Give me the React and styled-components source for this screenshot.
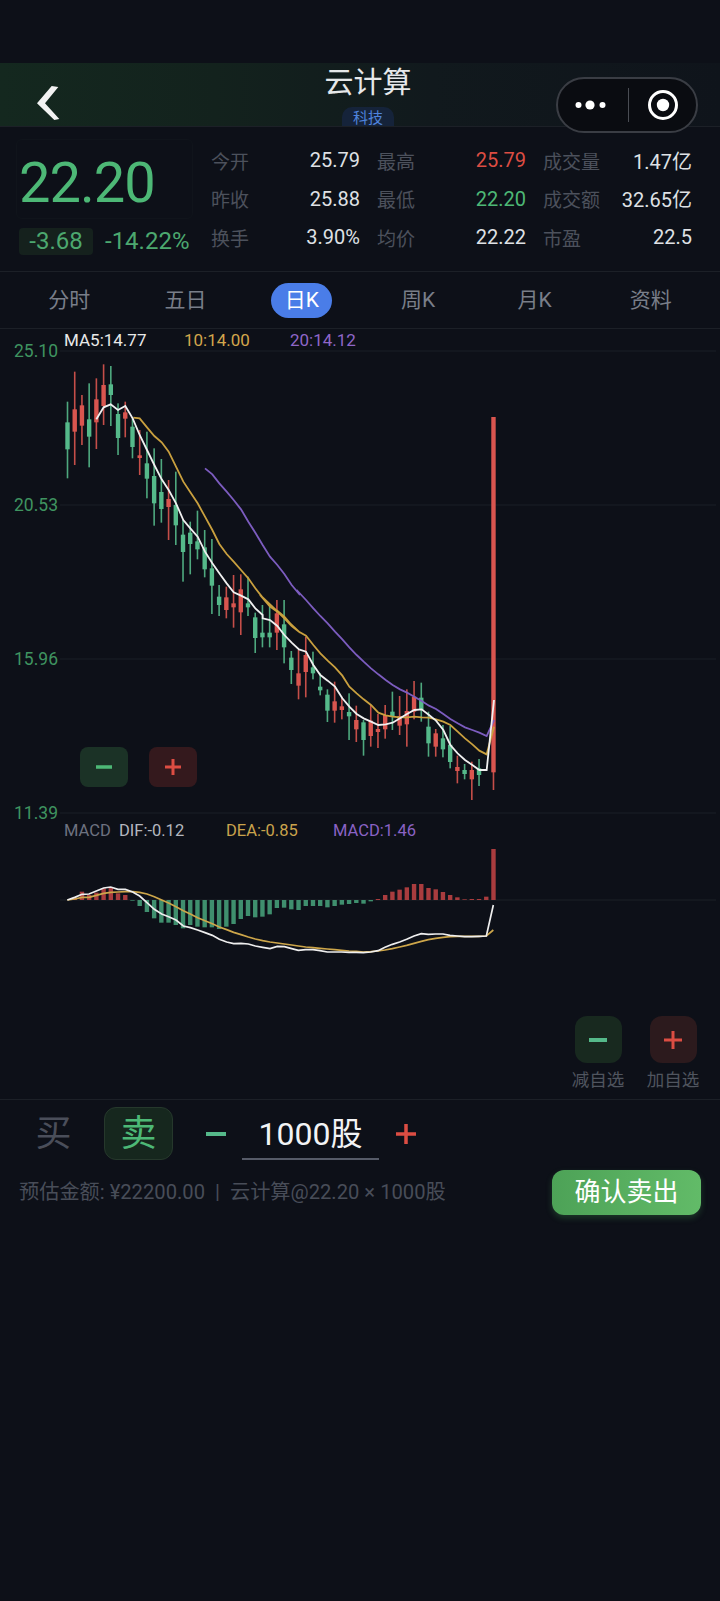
import styled, { createGlobalStyle } from "styled-components";

const GREEN = "#4db876";
const RED = "#dc4d43";
const FONT = `Roboto, "Noto Sans CJK SC", sans-serif`;

// candle readings: [index, high, bodyTop, bodyBottom, low, colour]
const CANDLES_A = [
  [0, 185, 247, 328, 415, "g"], [1, 95, 208, 275, 375, "r"], [2, 165, 196, 257, 315, "r"],
  [3, 130, 238, 290, 382, "g"], [4, 115, 178, 247, 327, "r"], [5, 73, 135, 198, 255, "r"],
  [6, 78, 133, 165, 258, "g"], [7, 190, 222, 294, 345, "g"], [8, 185, 217, 236, 292, "r"],
  [9, 235, 260, 321, 355, "g"], [10, 270, 346, 354, 405, "r"], [11, 275, 370, 416, 475, "g"],
  [12, 325, 408, 490, 557, "g"], [13, 357, 456, 507, 548, "g"], [14, 420, 477, 501, 600, "r"],
  [15, 395, 495, 556, 615, "g"], [16, 540, 584, 636, 725, "g"], [17, 545, 578, 612, 703, "g"],
  [18, 512, 604, 628, 658, "g"], [19, 570, 622, 688, 712, "g"], [20, 597, 685, 737, 822, "g"],
  [21, 735, 770, 795, 828, "g"], [22, 740, 772, 810, 835, "r"], [23, 705, 790, 802, 863, "r"],
  [24, 703, 748, 817, 885, "r"], [25, 710, 790, 802, 828, "g"], [26, 818, 832, 894, 939, "g"],
];
const CANDLES_B = [
  [27, 45, 128, 142, 172, "g"], [28, 50, 128, 142, 172, "g"], [29, 30, 70, 128, 180, "r"],
  [30, 30, 103, 172, 220, "g"], [31, 183, 203, 240, 282, "g"], [32, 180, 250, 287, 328, "r"],
  [33, 140, 195, 246, 322, "r"], [34, 185, 232, 250, 268, "g"], [35, 250, 290, 301, 316, "g"],
  [36, 298, 314, 362, 396, "g"], [37, 275, 334, 362, 398, "r"], [38, 320, 349, 360, 388, "r"],
  [39, 310, 366, 379, 450, "g"], [40, 347, 390, 418, 456, "r"], [41, 390, 397, 450, 497, "g"],
  [42, 345, 392, 438, 470, "r"], [43, 372, 417, 426, 474, "r"], [44, 345, 375, 418, 446, "r"],
  [45, 305, 365, 378, 420, "g"], [46, 318, 378, 407, 435, "r"], [47, 298, 363, 403, 470, "r"],
  [48, 273, 320, 365, 388, "r"], [49, 278, 323, 360, 395, "g"], [50, 365, 410, 460, 500, "g"],
  [51, 417, 430, 470, 500, "r"], [52, 405, 445, 478, 502, "g"], [53, 408, 464, 516, 535, "g"],
  [54, 497, 531, 543, 580, "r"], [55, 522, 540, 552, 568, "g"], [56, 515, 540, 568, 630, "r"],
  [57, 507, 535, 555, 588, "g"], [59, -519, -519, 547, 600, "r"],
];

const candleX = (i) => 67.5 + 7.22 * i;
const upper = (v) => 340 + v / 3;
const lower = (v) => 590 + v / 3;
const candles = [
  ...CANDLES_A.map(([i, h, t, b, l, c]) => ({ i, h: upper(h), t: upper(t), b: upper(b), l: upper(l), c })),
  ...CANDLES_B.map(([i, h, t, b, l, c]) => ({ i, h: lower(h), t: lower(t), b: lower(b), l: lower(l), c })),
];

const toPoints = (a, ox, oy, b, bx, by) =>
  [...a.map(([x, y]) => `${ox + x / 3},${oy + y / 3}`), ...b.map(([x, y]) => `${bx + x / 3},${by + y / 3}`)].join(" ");

const MA5 = toPoints(
  [[139,238],[161,202],[182,193],[204,210],[226,198],[248,235],[269,285],[291,330],[313,375],[335,418],[356,450],[378,490],[400,540],[421,565],[443,590],[465,635],[487,670],[508,700],[530,730],[551,757],[573,767],[595,778],[616,805],[638,825]],
  50, 340,
  [[8,85],[30,90],[52,108],[73,135],[95,158],[117,178],[138,185],[160,225],[181,255],[203,272],[225,290],[247,325],[268,350],[290,372],[311,385],[333,395],[355,405],[377,403],[398,398],[420,385],[441,372],[463,360],[485,358],[507,375],[528,392],[550,420],[571,465],[593,490],[615,510],[637,525],[658,540],[680,540],[702,330]],
  260, 590
);
const MA10 = toPoints(
  [[250,233],[269,235],[291,262],[313,288],[335,307],[356,335],[378,380],[400,425],[421,457],[443,490],[465,530],[487,570],[508,612],[530,642],[551,665],[573,690],[595,715],[616,745],[638,773],[660,800],[682,812],[703,830],[725,855],[750,878]],
  50, 340,
  [[0,15],[30,50],[52,65],[73,85],[95,108],[117,125],[138,137],[160,165],[181,190],[203,212],[225,232],[247,257],[268,290],[290,310],[311,328],[333,345],[355,368],[377,376],[398,380],[420,382],[441,382],[463,380],[485,382],[507,383],[528,388],[550,395],[571,405],[593,425],[615,445],[637,463],[658,482],[680,493],[702,410]],
  260, 590
);
const MA20 = toPoints(
  [[465,385],[487,403],[508,430],[530,455],[551,480],[573,508],[595,545],[616,578],[638,615],[660,650],[682,675],[703,702],[725,735],[750,765]],
  50, 340,
  [[110,0],[138,30],[160,55],[181,78],[203,100],[225,125],[247,148],[268,172],[290,195],[311,215],[333,235],[355,253],[377,270],[398,285],[420,298],[441,308],[463,320],[485,333],[507,347],[528,357],[550,372],[571,387],[593,400],[615,412],[637,420],[658,428],[680,438],[702,390]],
  260, 590
);

// macd bar ends, index 0..59, in crop units where 270 is the zero line
const BARS = [270,262,245,255,248,235,232,250,255,272,288,306,325,338,338,345,355,345,350,352,352,357,350,342,327,318,322,320,313,294,293,298,300,288,288,288,292,288,284,282,279,281,274,267,255,245,239,232,222,222,234,238,246,255,262,268,267,267,260,117];

const DIF = toPoints(
  [[52,270],[74,262],[96,253],[117,252],[139,243],[161,234],[182,231],[204,238],[226,238],[248,246],[269,258],[291,278],[313,298],[335,312],[356,320],[378,330],[400,348],[421,353],[443,360],[465,368],[487,376],[508,388],[530,396],[551,401],[573,400],[595,402],[616,408],[638,412],[660,416],[682,409],[703,410],[725,416]],
  50, 810,
  [[25,421],[47,419],[69,419],[90,422],[112,426],[134,426],[155,426],[177,427],[199,427],[220,428],[242,426],[264,422],[285,412],[307,403],[329,396],[350,388],[372,378],[394,371],[415,373],[437,372],[459,372],[480,376],[502,378],[524,380],[545,380],[567,379],[589,378],[610,285]],
  290, 810
);
const DEA = toPoints(
  [[52,270],[74,267],[96,262],[117,262],[139,256],[161,250],[182,247],[204,246],[226,245],[248,245],[269,247],[291,252],[313,260],[335,270],[356,279],[378,290],[400,302],[421,312],[443,323],[465,332],[487,341],[508,351],[530,359],[551,367],[573,374],[595,381],[616,387],[638,392],[660,396],[682,399],[703,402],[725,405]],
  50, 810,
  [[25,408],[47,411],[69,413],[90,415],[112,417],[134,419],[155,421],[177,423],[199,424],[220,426],[242,425],[264,423],[285,420],[307,416],[329,411],[350,406],[372,400],[394,394],[415,389],[437,385],[459,382],[480,380],[502,379],[524,379],[545,379],[567,379],[589,378],[610,360]],
  290, 810
);

const STATS = [
  ["今开", "25.79"], ["最高", "25.79", RED], ["成交量", "1.47亿"],
  ["昨收", "25.88"], ["最低", "22.20", GREEN], ["成交额", "32.65亿"],
  ["换手", "3.90%"], ["均价", "22.22"], ["市盈", "22.5"],
];
const TABS = ["分时", "五日", "日K", "周K", "月K", "资料"];
const AXIS = [["25.10", 351], ["20.53", 505], ["15.96", 659], ["11.39", 813]];

const Global = createGlobalStyle`
  html, body { margin: 0; padding: 0; background: #0d1018; }
  * { box-sizing: border-box; }
`;

const Page = styled.div`
  width: 720px;
  min-height: 1601px;
  background: #0d1018;
  color: #dfe1e5;
  font-family: ${FONT};
  overflow: hidden;
`;
const StatusGap = styled.div`
  height: 63px;
`;
const Header = styled.header`
  position: relative;
  height: 64px;
  display: flex;
  flex-direction: column;
  align-items: center;
  padding-left: 16px;
  background: linear-gradient(90deg, #14281f 0%, #13221d 30%, #11191d 60%, #0f141b 100%);
  border-bottom: 1px solid #1c2027;
`;
const BackIcon = styled.svg`
  position: absolute;
  left: 37px;
  top: 23px;
`;
const Title = styled.div`
  height: 44px;
  font-size: 29px;
  line-height: 41px;
  color: #e6e8ea;
`;
const Badge = styled.div`
  width: 52px;
  height: 19px;
  border-radius: 10px 10px 0 0;
  background: #15233a;
  color: #4f83dc;
  font-size: 15px;
  line-height: 22px;
  text-align: center;
`;
const Capsule = styled.div`
  position: absolute;
  left: 556px;
  top: 14px;
  width: 142px;
  height: 56px;
  display: flex;
  align-items: center;
  border: 2px solid #3a3d44;
  border-radius: 28px;
  background: #0a0c11;
`;
const CapsuleCell = styled.div`
  flex: 1;
  display: flex;
  justify-content: center;
  padding: ${(p) => (p.$left ? "0 4px 0 0" : "0 0 0 1px")};
`;
const CapsuleLine = styled.div`
  width: 1px;
  height: 34px;
  background: #4a4d54;
`;
const Summary = styled.section`
  height: 145px;
  display: flex;
  padding: 12px 28px 0 16px;
  border-bottom: 1px solid #1c2027;
`;
const PriceBox = styled.div`
  width: 195px;
  flex: none;
`;
const PriceValue = styled.div`
  width: 177px;
  height: 80px;
  padding-left: 2px;
  color: ${GREEN};
  font-size: 56px;
  line-height: 87px;
  letter-spacing: -1px;
  border: 1px solid #10141b;
  border-radius: 6px;
`;
const ChangeRow = styled.div`
  display: flex;
  align-items: center;
  gap: 12px;
  margin-top: 8px;
  padding-left: 3px;
  color: #4ca86f;
  font-size: 24px;
`;
const ChangePill = styled.span`
  width: 74px;
  height: 27px;
  line-height: 27px;
  text-align: center;
  border-radius: 4px;
  background: #15211d;
`;
const StatGrid = styled.div`
  flex: 1;
  display: grid;
  grid-template-columns: repeat(3, 149px);
  grid-auto-rows: 38.5px;
  column-gap: 17px;
  margin-top: 2px;
`;
const Stat = styled.div`
  display: flex;
  align-items: center;
  justify-content: space-between;
  font-size: 19px;
`;
const StatLabel = styled.span`
  color: #4c515c;
`;
const StatValue = styled.span`
  color: ${(p) => p.$color || "#dfe1e5"};
  font-size: 20px;
`;
const Tabs = styled.nav`
  height: 57px;
  display: grid;
  grid-template-columns: repeat(6, 1fr);
  align-items: center;
  justify-items: center;
  padding: 0 11px;
  border-bottom: 1px solid #1c2027;
`;
const Tab = styled.div`
  width: 61px;
  height: 35px;
  line-height: 35px;
  text-align: center;
  font-size: 21px;
  border-radius: 18px;
  color: ${(p) => (p.$active ? "#fff" : "#797e89")};
  background: ${(p) => (p.$active ? "#4a7de8" : "transparent")};
`;
const KlinePanel = styled.section`
  position: relative;
  height: 492px;
`;
const ChartSvg = styled.svg`
  display: block;
`;
const Legend = styled.div`
  position: absolute;
  left: 64px;
  top: 0;
  height: 22px;
  display: flex;
  font-size: 17px;
  line-height: 22px;
`;
const LegendItem = styled.span`
  width: ${(p) => p.$w}px;
  color: ${(p) => p.$color};
`;
const AxisLabel = styled.span`
  position: absolute;
  right: 662px;
  color: #3f9460;
  font-size: 17.5px;
  line-height: 20px;
`;
const StepButton = styled.div`
  width: 48px;
  height: 40px;
  display: flex;
  align-items: center;
  justify-content: center;
  border-radius: 8px;
  background: ${(p) => (p.$plus ? "#34191d" : "#1b3226")};
`;
const ChartSteps = styled.div`
  position: absolute;
  left: 80px;
  top: 418px;
  display: flex;
  gap: 21px;
`;
const MacdPanel = styled.section`
  height: 185px;
`;
const MacdLegend = styled.div`
  height: 20px;
  padding-left: 64px;
  display: flex;
  font-size: 16.5px;
  line-height: 20px;
`;
const WatchRow = styled.div`
  height: 93px;
  display: flex;
  justify-content: flex-end;
  gap: 15px;
  padding: 10px 17px 0 0;
`;
const WatchItem = styled.div`
  width: 60px;
  display: flex;
  flex-direction: column;
  align-items: center;
  color: #50555f;
  font-size: 17.5px;
  line-height: 24px;
  white-space: nowrap;
`;
const WatchButton = styled.div`
  width: 47px;
  height: 47px;
  margin-bottom: 5px;
  display: flex;
  align-items: center;
  justify-content: center;
  border-radius: 12px;
  background: ${(p) => (p.$plus ? "#2c1a1d" : "#18291f")};
`;
const Trade = styled.section`
  border-top: 1px solid #1c2027;
  padding: 7px 19px 0 19px;
`;
const TradeRow = styled.div`
  display: flex;
  align-items: center;
  height: 53px;
`;
const SideTab = styled.div`
  width: 69px;
  height: 53px;
  margin-right: 16px;
  font-size: 36px;
  line-height: 53px;
  text-align: center;
  border-radius: 12px;
  color: ${(p) => (p.$active ? GREEN : "#4a4e5a")};
  background: ${(p) => (p.$active ? "#16271e" : "transparent")};
  border: 1px solid ${(p) => (p.$active ? "#26382c" : "transparent")};
`;
const QtyButton = styled.div`
  width: 20px;
  height: 20px;
  margin: ${(p) => (p.$plus ? "0 0 0 17px" : "0 16px 0 17px")};
  display: flex;
  align-items: center;
  justify-content: center;
`;
const Qty = styled.div`
  width: 137px;
  height: 53px;
  text-align: center;
  font-size: 32px;
  line-height: 54px;
  color: #f2f3f5;
  border-bottom: 2px solid #565b68;
`;
const TradeFoot = styled.div`
  display: flex;
  align-items: center;
  justify-content: space-between;
  margin-top: 10px;
`;
const Estimate = styled.div`
  padding: 0 0 4px 0;
  color: #484d58;
  font-size: 20.2px;
  white-space: pre;
`;
const ConfirmButton = styled.div`
  width: 149px;
  height: 45px;
  line-height: 44px;
  text-align: center;
  font-size: 26px;
  color: #fff;
  border-radius: 12px;
  background: linear-gradient(90deg, #4da257, #62bb68);
  box-shadow: 0 3px 6px rgba(76, 175, 90, 0.25);
`;

function Sign({ plus, size = 18, weight = 4, color }) {
  const mid = size / 2;
  return (
    <svg width={size} height={size} viewBox={`0 0 ${size} ${size}`}>
      <rect x="0" y={mid - weight / 2} width={size} height={weight} fill={color} />
      {plus && <rect x={mid - weight / 2} y="0" width={weight} height={size} fill={color} />}
    </svg>
  );
}

function KlineChart() {
  return (
    <ChartSvg width="720" height="492" viewBox="0 329 720 492">
      {AXIS.map(([, y]) => (
        <line key={y} x1="60" x2="716" y1={y} y2={y} stroke="#1a1e26" strokeWidth="1" />
      ))}
      {candles.map((d) => {
        const fill = d.c === "g" ? "#55b98a" : "#d9554f";
        const x = candleX(d.i);
        return (
          <g key={d.i}>
            <rect x={x - 0.8} y={d.h} width="1.6" height={d.l - d.h} fill={fill} opacity="0.9" />
            <rect x={x - 2.2} y={d.t} width="4.4" height={Math.max(d.b - d.t, 2)} fill={fill} />
          </g>
        );
      })}
      <polyline points={MA20} fill="none" stroke="#7c5cbf" strokeWidth="1.8" />
      <polyline points={MA10} fill="none" stroke="#c9a03f" strokeWidth="1.8" />
      <polyline points={MA5} fill="none" stroke="#f0f0f0" strokeWidth="1.8" />
    </ChartSvg>
  );
}

function MacdChart() {
  return (
    <ChartSvg width="720" height="165" viewBox="0 841 720 165">
      <line x1="60" x2="716" y1="900" y2="900" stroke="#1c2027" strokeWidth="1" />
      {BARS.map((end, i) => {
        const y = 810 + end / 3;
        const up = end < 270;
        return (
          <rect
            key={i}
            x={candleX(i) - 2.2}
            y={up ? y : 900}
            width="4.4"
            height={Math.abs(y - 900)}
            fill={up ? "#a93c3e" : "#3f8f6e"}
          />
        );
      })}
      <polyline points={DEA} fill="none" stroke="#cda64a" strokeWidth="1.7" />
      <polyline points={DIF} fill="none" stroke="#eeeeee" strokeWidth="1.7" />
    </ChartSvg>
  );
}

export default function App() {
  return (
    <Page>
      <Global />
      <StatusGap />
      <Header>
        <BackIcon width="24" height="36" viewBox="0 0 24 36">
          <path d="M14.7 0 L21.3 1 L8 17.3 L22.3 33 L17.3 34 L0 17.3 Z" fill="#f2f2f2" />
        </BackIcon>
        <Title>云计算</Title>
        <Badge>科技</Badge>
        <Capsule>
          <CapsuleCell $left>
            <svg width="32" height="12" viewBox="0 0 32 12">
              <circle cx="3.5" cy="6" r="3" fill="#fff" />
              <circle cx="15" cy="6" r="4.6" fill="#fff" />
              <circle cx="27.5" cy="6" r="3" fill="#fff" />
            </svg>
          </CapsuleCell>
          <CapsuleLine />
          <CapsuleCell>
            <svg width="32" height="32" viewBox="0 0 32 32">
              <circle cx="16" cy="16" r="13.5" fill="none" stroke="#fff" strokeWidth="3" />
              <circle cx="16" cy="16" r="6.2" fill="#fff" />
            </svg>
          </CapsuleCell>
        </Capsule>
      </Header>
      <Summary>
        <PriceBox>
          <PriceValue>22.20</PriceValue>
          <ChangeRow>
            <ChangePill>-3.68</ChangePill>
            <span>-14.22%</span>
          </ChangeRow>
        </PriceBox>
        <StatGrid>
          {STATS.map(([label, value, color]) => (
            <Stat key={label}>
              <StatLabel>{label}</StatLabel>
              <StatValue $color={color}>{value}</StatValue>
            </Stat>
          ))}
        </StatGrid>
      </Summary>
      <Tabs>
        {TABS.map((t) => (
          <Tab key={t} $active={t === "日K"}>{t}</Tab>
        ))}
      </Tabs>
      <KlinePanel>
        <KlineChart />
        <Legend>
          <LegendItem $w={120} $color="#e8e8e8">MA5:14.77</LegendItem>
          <LegendItem $w={106} $color="#d2a64c">10:14.00</LegendItem>
          <LegendItem $w={90} $color="#8f66c8">20:14.12</LegendItem>
        </Legend>
        {AXIS.map(([text, y]) => (
          <AxisLabel key={text} style={{ top: y - 339 }}>{text}</AxisLabel>
        ))}
        <ChartSteps>
          <StepButton>
            <Sign size={16} weight={3.5} color={GREEN} />
          </StepButton>
          <StepButton $plus>
            <Sign plus size={16} weight={3} color={RED} />
          </StepButton>
        </ChartSteps>
      </KlinePanel>
      <MacdPanel>
        <MacdLegend>
          <LegendItem $w={55} $color="#6d7280">MACD</LegendItem>
          <LegendItem $w={107} $color="#b4b7bf">DIF:-0.12</LegendItem>
          <LegendItem $w={107} $color="#c9a34c">DEA:-0.85</LegendItem>
          <LegendItem $w={90} $color="#8a62c4">MACD:1.46</LegendItem>
        </MacdLegend>
        <MacdChart />
      </MacdPanel>
      <WatchRow>
        <WatchItem>
          <WatchButton>
            <Sign size={18} weight={4} color="#55b98a" />
          </WatchButton>
          减自选
        </WatchItem>
        <WatchItem>
          <WatchButton $plus>
            <Sign plus size={18} weight={3} color={RED} />
          </WatchButton>
          加自选
        </WatchItem>
      </WatchRow>
      <Trade>
        <TradeRow>
          <SideTab>买</SideTab>
          <SideTab $active>卖</SideTab>
          <QtyButton>
            <Sign size={20} weight={4} color="#55b98a" />
          </QtyButton>
          <Qty>1000股</Qty>
          <QtyButton $plus>
            <Sign plus size={20} weight={3.5} color={RED} />
          </QtyButton>
        </TradeRow>
        <TradeFoot>
          <Estimate>预估金额: ¥22200.00  |  云计算@22.20 × 1000股</Estimate>
          <ConfirmButton>确认卖出</ConfirmButton>
        </TradeFoot>
      </Trade>
    </Page>
  );
}
